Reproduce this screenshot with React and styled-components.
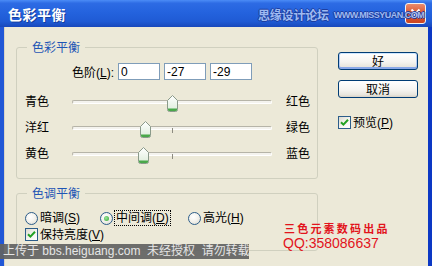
import React from "react";
import styled, { createGlobalStyle } from "styled-components";

const GlobalStyle = createGlobalStyle`
  html, body {
    margin: 0;
    padding: 0;
    background: #ece9d8;
  }
  body {
    font-family: "Liberation Sans", "Noto Sans CJK SC", sans-serif;
    font-size: 12px;
    color: #000;
  }
`;

const Window = styled.div`
  position: relative;
  width: 432px;
  height: 266px;
  display: flex;
  flex-direction: column;
  overflow: hidden;
`;

const TitleBar = styled.div`
  position: relative;
  flex: none;
  height: 27px;
  box-sizing: border-box;
  display: flex;
  align-items: center;
  justify-content: space-between;
  padding: 0 6px 0 8px;
  background: linear-gradient(#4b8cf6 0%, #2d6be4 12%, #2463de 45%, #1f5ad4 80%, #1848bb 100%);
`;

const Title = styled.span`
  color: #fff;
  font-family: "Noto Sans CJK SC", sans-serif;
  font-size: 14px;
  font-weight: bold;
  letter-spacing: 0.5px;
  text-shadow: 1px 1px 0 #143f9e;
`;

const Watermark = styled.div`
  position: absolute;
  left: 258px;
  top: 8px;
  display: flex;
  align-items: center;
  gap: 5px;
  white-space: nowrap;
  color: #a9c2f4;
  font-weight: bold;
  text-shadow: 1px 0 0 #1d3c9c, -1px 0 0 #1d3c9c, 0 1px 0 #1d3c9c, 0 -1px 0 #1d3c9c;
  opacity: 0.92;
  z-index: 2;
`;

const WatermarkCn = styled.span`
  font-family: "Noto Sans CJK SC", sans-serif;
  font-size: 12px;
  line-height: 14px;
  letter-spacing: -0.2px;
`;

const WatermarkEn = styled.span`
  font-family: "Liberation Sans", sans-serif;
  font-size: 9px;
  line-height: 12px;
  letter-spacing: -0.5px;
`;

const CloseButton = styled.span`
  width: 21px;
  height: 21px;
  box-sizing: border-box;
  border: 1px solid #f3f3f3;
  border-radius: 3px;
  background: linear-gradient(#eb8c6e 0%, #db5a35 45%, #cc4520 100%);
  display: flex;
  align-items: center;
  justify-content: center;
`;

const Frame = styled.div`
  flex: 1;
  display: flex;
  gap: 20px;
  padding: 13px 0 0 12px;
  background: #ece9d8;
  border-left: 4px solid #2157d6;
  border-right: 4px solid #0c38c4;
  box-shadow: inset 1px 0 0 #d8d4c6;
`;

const Column = styled.div`
  display: flex;
  flex-direction: column;
  width: 302px;
`;

const Group = styled.fieldset`
  box-sizing: border-box;
  width: 302px;
  margin: ${(p) => p.$top || 0}px 0 0 0;
  padding: ${(p) => p.$pad};
  border: 1px solid #d0d0bf;
  border-radius: 3px;
  min-width: 0;
`;

const Legend = styled.legend`
  margin-left: 2px;
  padding: 0 5px;
  color: #1f55b5;
  font-family: "Noto Sans CJK SC", sans-serif;
  font-size: 12px;
  line-height: 14px;
`;

const LevelRow = styled.div`
  display: flex;
  align-items: center;
  gap: 4px;
  height: 17px;
  margin-left: 47px;
`;

const Underline = styled.span`
  text-decoration: underline;
`;

const LevelInput = styled.input`
  width: 42px;
  height: 17px;
  box-sizing: border-box;
  margin: 0;
  padding: 0 2px;
  border: 1px solid #7f9db9;
  background: #fff;
  font-family: "Liberation Sans", sans-serif;
  font-size: 12px;
  outline: none;
`;

const SliderGrid = styled.div`
  display: grid;
  grid-template-columns: 47px 200px 1fr;
  grid-auto-rows: 26px;
  align-items: center;
  margin-top: 9px;
`;

const SideLabel = styled.span`
  line-height: 14px;
  white-space: nowrap;
  padding-left: ${(p) => (p.$right ? "14px" : "0")};
`;

const Slider = styled.div`
  position: relative;
  height: 26px;
  display: flex;
  align-items: center;
`;

const Track = styled.div`
  position: relative;
  width: 100%;
  height: 4px;
  box-sizing: border-box;
  border: 1px solid #b6b4a8;
  border-bottom-color: #fff;
  border-right-color: #fff;
  border-radius: 2px;
  background: #f4f3ee;

  &::after {
    content: "";
    position: absolute;
    left: 99px;
    top: 1px;
    width: 1px;
    height: 5px;
    background: #8d8b80;
  }
`;

const Thumb = styled.svg`
  position: absolute;
  top: 6px;
`;

const OptionGrid = styled.div`
  display: grid;
  grid-template-columns: 75px 88px auto;
  align-items: center;
  height: 13px;
`;

const Option = styled.span`
  display: flex;
  align-items: center;
  gap: 2px;
  line-height: 14px;
`;

const RadioDot = styled.span`
  width: 13px;
  height: 13px;
  box-sizing: border-box;
  border-radius: 50%;
  border: 1px solid #2c5d8a;
  background: radial-gradient(circle at 40% 35%, #ffffff 0%, #f4f3ee 45%, #d9d7cc 100%);
  display: inline-flex;
  align-items: center;
  justify-content: center;

  &::after {
    content: "";
    display: ${(p) => (p.$checked ? "block" : "none")};
    width: 5px;
    height: 5px;
    border-radius: 50%;
    background: radial-gradient(circle at 40% 40%, #9ee49e, #2ba82b);
  }
`;

const Focused = styled.span`
  outline: 1px dotted #000;
  padding: 0 1px;
`;

const CheckBox = styled.span`
  width: 13px;
  height: 13px;
  box-sizing: border-box;
  border: 1px solid #2c5d8a;
  background: linear-gradient(135deg, #dcdad0 0%, #f4f3ee 50%, #ffffff 100%);
  display: inline-flex;
  align-items: center;
  justify-content: center;
`;

const CheckRow = styled.div`
  display: flex;
  align-items: center;
  gap: 2px;
  height: 13px;
  margin-top: ${(p) => p.$top || 0}px;
  line-height: 14px;
`;

const ButtonColumn = styled.div`
  display: flex;
  flex-direction: column;
  gap: 10px;
  padding-top: 12px;
  width: 80px;
`;

const Button = styled.button`
  width: 80px;
  height: 18px;
  box-sizing: border-box;
  margin: 0;
  padding: 0;
  border: 1px solid #003c74;
  border-radius: 3px;
  background: linear-gradient(#ffffff 0%, #f5f4f0 55%, #e8e6de 85%, #d8d2c6 100%);
  font-family: "Noto Sans CJK SC", sans-serif;
  font-size: 12px;
  line-height: 16px;
  color: #000;
  box-shadow: ${(p) =>
    p.$default
      ? "inset 0 1px 0 #cee7ff, inset 0 -2px 0 #89a8e8, inset 1px 0 0 #b6cdf5, inset -1px 0 0 #b6cdf5"
      : "none"};
`;

const UploadNote = styled.div`
  position: absolute;
  left: 0;
  top: 244px;
  width: 249px;
  height: 15px;
  box-sizing: border-box;
  padding-left: 3px;
  background: rgba(98, 98, 98, 0.92);
  color: #e6e6e6;
  font-size: 12px;
  line-height: 15px;
  white-space: pre;
  z-index: 3;
`;

const Credit = styled.div`
  position: absolute;
  left: 283px;
  top: 221px;
  display: flex;
  flex-direction: column;
  color: #e2141c;
  z-index: 3;
`;

const CreditCn = styled.span`
  font-family: "Noto Sans CJK SC", sans-serif;
  font-size: 11px;
  font-weight: bold;
  line-height: 14px;
  letter-spacing: 2.2px;
  padding-left: 1px;
`;

const CreditQq = styled.span`
  font-family: "Liberation Sans", sans-serif;
  font-size: 14px;
  line-height: 16px;
`;

const Check = () => (
  <svg width="9" height="9" viewBox="0 0 9 9">
    <path d="M1 4.2 L3.4 6.6 L8 1.8" fill="none" stroke="#21a121" strokeWidth="2" />
  </svg>
);

const SliderThumb = ({ value }) => (
  <Thumb width="11" height="17" viewBox="0 0 11 17" style={{ left: value + 100 - 5 }}>
    <defs>
      <linearGradient id="thumbFill" x1="0" y1="0" x2="0" y2="1">
        <stop offset="0" stopColor="#ffffff" />
        <stop offset="1" stopColor="#dcecd9" />
      </linearGradient>
    </defs>
    <path
      d="M5.5 0.5 L10.5 5.5 V14.5 Q10.5 16.5 8.5 16.5 H2.5 Q0.5 16.5 0.5 14.5 V5.5 Z"
      fill="url(#thumbFill)"
      stroke="#8a9a8a"
    />
    <path d="M1 13.5 H10 V14.5 Q10 16 8.5 16 H2.5 Q1 16 1 14.5 Z" fill="#4aa84a" />
  </Thumb>
);

const sliders = [
  { left: "青色", right: "红色", value: 0 },
  { left: "洋红", right: "绿色", value: -27 },
  { left: "黄色", right: "蓝色", value: -29 },
];

const App = () => {
  return (
    <Window>
      <GlobalStyle />
      <TitleBar>
        <Title>色彩平衡</Title>
        <Watermark>
          <WatermarkCn>思缘设计论坛</WatermarkCn>
          <WatermarkEn>WWW.MISSYUAN.COM</WatermarkEn>
        </Watermark>
        <CloseButton>
          <svg width="11" height="11" viewBox="0 0 11 11">
            <path d="M1.5 1.5 L9.5 9.5 M9.5 1.5 L1.5 9.5" stroke="#fff" strokeWidth="2" />
          </svg>
        </CloseButton>
      </TitleBar>

      <Frame>
        <Column>
          <Group $pad="9px 0 11px 8px">
            <Legend>色彩平衡</Legend>
            <LevelRow>
              <span>
                色阶(<Underline>L</Underline>):
              </span>
              <LevelInput readOnly value="0" />
              <LevelInput readOnly value="-27" />
              <LevelInput readOnly value="-29" />
            </LevelRow>
            <SliderGrid>
              {sliders.map((s) => (
                <React.Fragment key={s.left}>
                  <SideLabel>{s.left}</SideLabel>
                  <Slider>
                    <Track />
                    <SliderThumb value={s.value} />
                  </Slider>
                  <SideLabel $right>{s.right}</SideLabel>
                </React.Fragment>
              ))}
            </SliderGrid>
          </Group>

          <Group $top={7} $pad="11px 8px 9px 8px">
            <Legend>色调平衡</Legend>
            <OptionGrid>
              <Option>
                <RadioDot />
                <span>
                  暗调(<Underline>S</Underline>)
                </span>
              </Option>
              <Option>
                <RadioDot $checked />
                <Focused>
                  中间调(<Underline>D</Underline>)
                </Focused>
              </Option>
              <Option>
                <RadioDot />
                <span>
                  高光(<Underline>H</Underline>)
                </span>
              </Option>
            </OptionGrid>
            <CheckRow $top={4}>
              <CheckBox>
                <Check />
              </CheckBox>
              <span>
                保持亮度(<Underline>V</Underline>)
              </span>
            </CheckRow>
          </Group>
        </Column>

        <ButtonColumn>
          <Button $default>好</Button>
          <Button>取消</Button>
          <CheckRow $top={8}>
            <CheckBox>
              <Check />
            </CheckBox>
            <span>
              预览(<Underline>P</Underline>)
            </span>
          </CheckRow>
        </ButtonColumn>
      </Frame>

      <UploadNote>{"上传于 bbs.heiguang.com  未经授权  请勿转载"}</UploadNote>
      <Credit>
        <CreditCn>三色元素数码出品</CreditCn>
        <CreditQq>QQ:358086637</CreditQq>
      </Credit>
    </Window>
  );
};

export default App;
